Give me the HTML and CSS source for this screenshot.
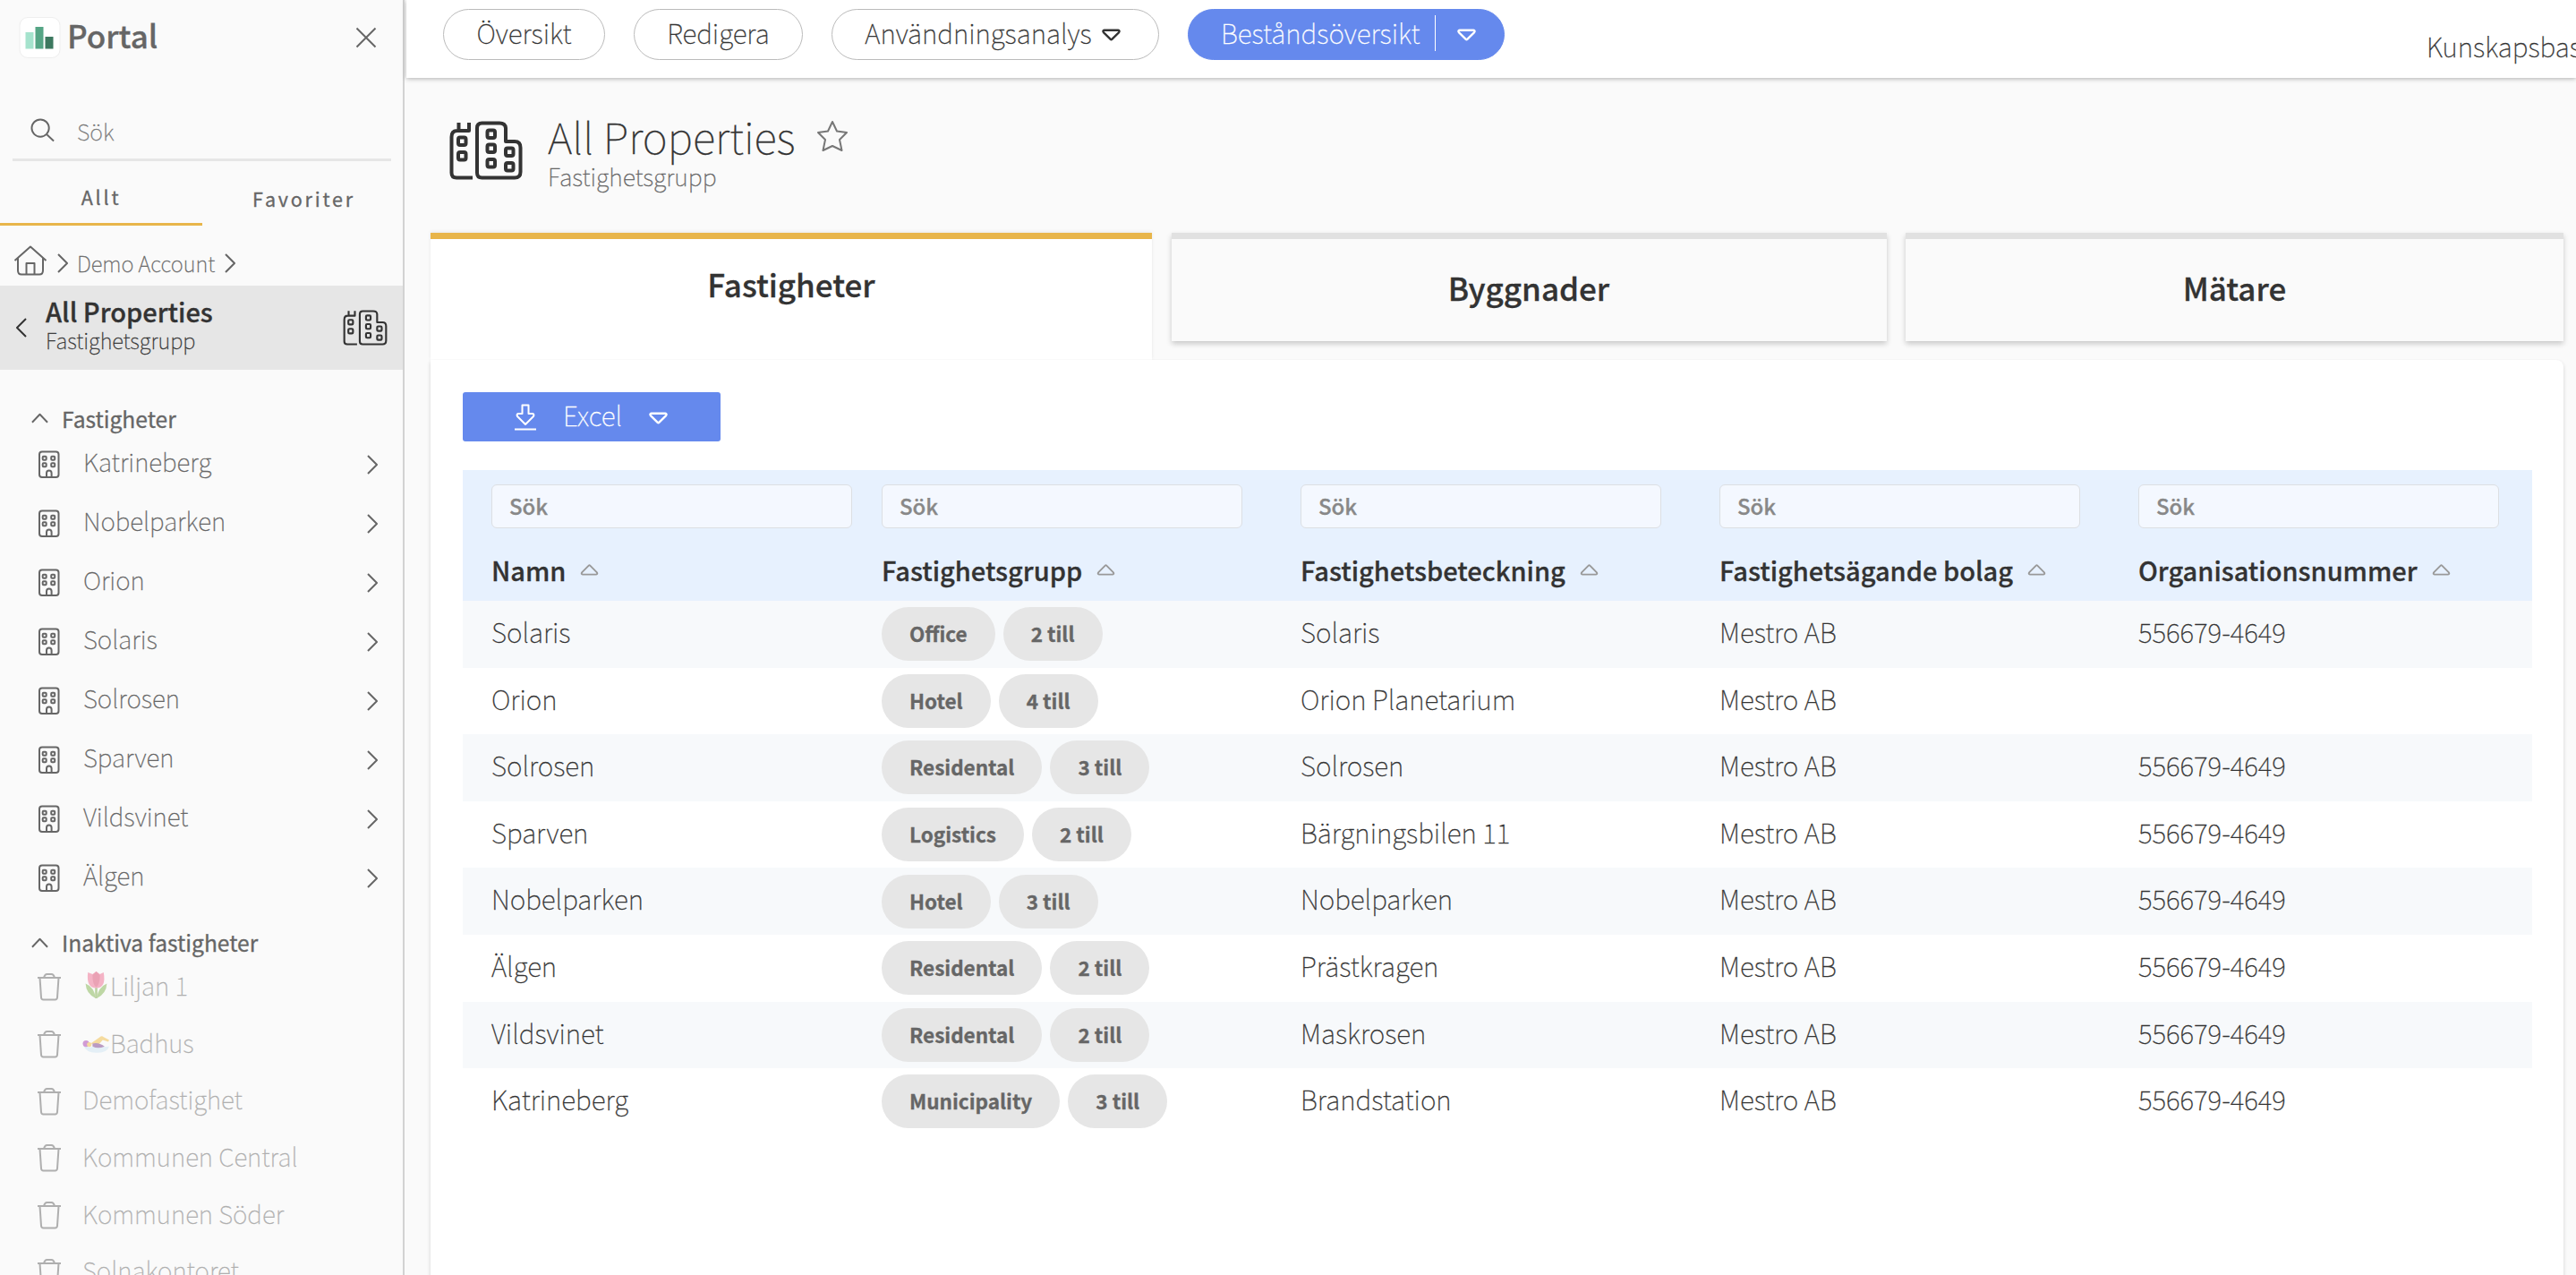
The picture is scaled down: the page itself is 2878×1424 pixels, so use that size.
FILE: index.html
```html
<!DOCTYPE html>
<html lang="sv">
<head>
    <meta charset="UTF-8">
    <meta name="viewport" content="width=device-width, initial-scale=1.0">
    <title>Portal - All Properties</title>
    <link rel="stylesheet" href="styles.css">
</head>
<body>
    <!-- Shared icons -->
    <svg class="sprite" width="0" height="0">
        <symbol id="chevron" viewBox="0 0 12 22"><path d="M1 1 L11 11 L1 21"/></symbol>
        <symbol id="up" viewBox="0 0 20 12"><path d="M1 11 L10 1.5 L19 11"/></symbol>
        <symbol id="triangle" viewBox="0 0 22 14"><path d="M3 1.5 H19 Q21.5 2 19.8 4.2 L11.8 12.2 Q11 13 10.2 12.2 L2.2 4.2 Q0.5 2 3 1.5 Z"/></symbol>
        <symbol id="building" viewBox="0 0 24 32">
            <rect x="1" y="1.5" width="21.5" height="28.5" rx="3"/>
            <rect x="4.7" y="6.7" width="4" height="4" rx="1"/><rect x="14.2" y="6.7" width="4" height="4" rx="1"/>
            <rect x="4.7" y="14.2" width="4" height="4" rx="1"/><rect x="14.2" y="14.2" width="4" height="4" rx="1"/>
            <path d="M9 30 V25.5 Q9 22.5 11.8 22.5 Q14.6 22.5 14.6 25.5 V30"/>
        </symbol>
        <symbol id="trash" viewBox="0 0 28 32"><path d="M1 6 H27 M8 6 Q9 2 11.5 2 H16.5 Q19 2 20 6 M3.5 6 L5 28 Q5.2 30.5 7.5 30.5 H20.5 Q22.8 30.5 23 28 L24.5 6"/></symbol>
        <symbol id="group" viewBox="0 0 82 66">
            <path d="M26 63.5 H8 Q2.5 63.5 2.5 58 V18 Q2.5 11 9 11 H10.5 V2 M10.5 11 H22 V2"/>
            <path d="M31 8 Q31 2.5 36.5 2.5 H56 Q62.5 2.5 63 8 V23 H73 Q79.5 23 79.5 30 V57 Q79.5 63.5 73 63.5 H36.5 Q31 63.5 31 58 Z"/>
            <rect x="10" y="18.5" width="8.5" height="8.5" rx="2"/><rect x="10" y="35" width="8.5" height="8.5" rx="2"/>
            <rect x="42.5" y="10.5" width="8.5" height="8.5" rx="2"/><rect x="42.5" y="26.5" width="8.5" height="8.5" rx="2"/><rect x="42.5" y="43" width="8.5" height="8.5" rx="2"/>
            <rect x="63" y="30.5" width="8.5" height="8.5" rx="2"/><rect x="63" y="47" width="8.5" height="8.5" rx="2"/>
        </symbol>
    </svg>

    <div class="app">
        <aside class="sidebar">
            <div class="brand">
                <svg class="logo" viewBox="0 0 46 46">
                    <rect x="0.5" y="0.5" width="45" height="45" rx="9" fill="#fff" stroke="#eee"/>
                    <rect x="7" y="17" width="9" height="18.5" fill="#a5e3cd"/>
                    <rect x="18" y="11" width="9" height="24.5" fill="#55a585"/>
                    <rect x="29" y="22" width="9" height="13.5" fill="#3c785f"/>
                </svg>
                <span class="brand-name">Portal</span>
                <svg class="icon close" viewBox="0 0 24 24"><path d="M1.5 1.5 L22.5 22.5 M22.5 1.5 L1.5 22.5"/></svg>
            </div>

            <div class="search">
                <svg class="icon search-icon" viewBox="0 0 28 28"><circle cx="11.5" cy="11.5" r="10"/><path d="M19 19 L27 26.5"/></svg>
                <span>Sök</span>
            </div>

            <div class="side-tabs">
                <div class="side-tab active">Allt</div>
                <div class="side-tab">Favoriter</div>
            </div>

            <div class="breadcrumb">
                <svg class="icon home" viewBox="0 0 38 34"><path d="M1.5 17 L19 1.5 L36.5 17 M5 14 V28 Q5 32.5 9 32.5 H29 Q33 32.5 33 28 V14 M14.5 32 V20 H23.5 V32"/></svg>
                <svg class="icon chevron"><use href="#chevron"/></svg>
                <span>Demo Account</span>
                <svg class="icon chevron"><use href="#chevron"/></svg>
            </div>

            <div class="current">
                <svg class="icon chevron back"><use href="#chevron"/></svg>
                <div class="current-text">
                    <div class="current-title">All Properties</div>
                    <div class="current-sub">Fastighetsgrupp</div>
                </div>
                <svg class="icon group-small"><use href="#group"/></svg>
            </div>

            <div class="section-title"><svg class="icon up"><use href="#up"/></svg>Fastigheter</div>
            <ul class="nav-list">
                <li><svg class="icon building"><use href="#building"/></svg><span>Katrineberg</span><svg class="icon chevron"><use href="#chevron"/></svg></li>
                <li><svg class="icon building"><use href="#building"/></svg><span>Nobelparken</span><svg class="icon chevron"><use href="#chevron"/></svg></li>
                <li><svg class="icon building"><use href="#building"/></svg><span>Orion</span><svg class="icon chevron"><use href="#chevron"/></svg></li>
                <li><svg class="icon building"><use href="#building"/></svg><span>Solaris</span><svg class="icon chevron"><use href="#chevron"/></svg></li>
                <li><svg class="icon building"><use href="#building"/></svg><span>Solrosen</span><svg class="icon chevron"><use href="#chevron"/></svg></li>
                <li><svg class="icon building"><use href="#building"/></svg><span>Sparven</span><svg class="icon chevron"><use href="#chevron"/></svg></li>
                <li><svg class="icon building"><use href="#building"/></svg><span>Vildsvinet</span><svg class="icon chevron"><use href="#chevron"/></svg></li>
                <li><svg class="icon building"><use href="#building"/></svg><span>Älgen</span><svg class="icon chevron"><use href="#chevron"/></svg></li>
            </ul>

            <div class="section-title inactive-title"><svg class="icon up"><use href="#up"/></svg>Inaktiva fastigheter</div>
            <ul class="nav-list inactive">
                <li>
                    <svg class="icon trash"><use href="#trash"/></svg>
                    <svg class="emoji" viewBox="0 0 30 30">
                        <path d="M15 16 V29" stroke="#7fae4d" stroke-width="2.5"/>
                        <path d="M14.5 29 Q13 17 3.5 13 Q4 24 14.5 29 M15.5 29 Q17 17 26.5 13 Q26 24 15.5 29" fill="#83b553"/>
                        <path d="M6 1 L11 3 L15 0 L19 3 L23 1 Q26 18 15 18 Q4 18 6 1" fill="#ef6f92"/>
                        <path d="M15 0 L19 4 Q19 14 15 17 Q11 14 11 4 Z" fill="#dc4c72"/>
                    </svg>
                    <span>Liljan 1</span>
                </li>
                <li>
                    <svg class="icon trash"><use href="#trash"/></svg>
                    <svg class="emoji" viewBox="0 0 30 30">
                        <path d="M1 18 Q8 22 15 18 Q23 20 29 19 Q27 26 15 26 Q4 26 1 18" fill="#cfe6f4"/>
                        <path d="M9 16 L19 9 Q21 7 23 9 L29 12 L28 14 L22 12 L17 18 Z" fill="#f2bd45"/>
                        <path d="M11 16 Q17 14 24 19 Q17 22 11 19 Z" fill="#7b3f8d"/>
                        <circle cx="4" cy="16" r="3.5" fill="#a93fb2"/><circle cx="7.5" cy="17" r="2.5" fill="#f2bd45"/>
                    </svg>
                    <span>Badhus</span>
                </li>
                <li><svg class="icon trash"><use href="#trash"/></svg><span>Demofastighet</span></li>
                <li><svg class="icon trash"><use href="#trash"/></svg><span>Kommunen Central</span></li>
                <li><svg class="icon trash"><use href="#trash"/></svg><span>Kommunen Söder</span></li>
                <li><svg class="icon trash"><use href="#trash"/></svg><span>Solnakontoret</span></li>
            </ul>
        </aside>

        <main class="main">
            <header class="topbar">
                <div class="pill pill-overview">Översikt</div>
                <div class="pill pill-edit">Redigera</div>
                <div class="pill pill-usage">Användningsanalys<svg class="icon triangle"><use href="#triangle"/></svg></div>
                <div class="pill primary"><span class="primary-label">Beståndsöversikt</span><svg class="icon triangle"><use href="#triangle"/></svg></div>
                <div class="help">Kunskapsbas</div>
            </header>

            <div class="page-head">
                <svg class="icon group-large"><use href="#group"/></svg>
                <div class="page-text">
                    <div class="page-title">
                        <h1>All Properties</h1>
                        <svg class="icon star" viewBox="0 0 36 36"><path d="M18 2 L23 12.5 L34 14 L26 22 L28.5 34 L18 29 L7.5 34 L10 22 L2 14 L13 12.5 Z"/></svg>
                    </div>
                    <div class="page-sub">Fastighetsgrupp</div>
                </div>
            </div>

            <div class="tabs">
                <div class="tab active">Fastigheter</div>
                <div class="tab">Byggnader</div>
                <div class="tab">Mätare</div>
            </div>

            <section class="panel">
                <div class="excel">
                    <svg class="icon download" viewBox="0 0 24 30"><path d="M8.5 1.5 H15.5 V11 H20.5 Q22 12 21 14 L12 23 L3 14 Q2 12 3.5 11 H8.5 Z M0 28.5 H24"/></svg>
                    <span>Excel</span>
                    <svg class="icon triangle"><use href="#triangle"/></svg>
                </div>

                <div class="table">
                    <div class="table-head">
                        <div class="col"><div class="filter">Sök</div><div class="label">Namn<svg class="icon sort"><use href="#triangle"/></svg></div></div>
                        <div class="col"><div class="filter">Sök</div><div class="label">Fastighetsgrupp<svg class="icon sort"><use href="#triangle"/></svg></div></div>
                        <div class="col"><div class="filter">Sök</div><div class="label">Fastighetsbeteckning<svg class="icon sort"><use href="#triangle"/></svg></div></div>
                        <div class="col"><div class="filter">Sök</div><div class="label">Fastighetsägande bolag<svg class="icon sort"><use href="#triangle"/></svg></div></div>
                        <div class="col"><div class="filter">Sök</div><div class="label">Organisationsnummer<svg class="icon sort"><use href="#triangle"/></svg></div></div>
                    </div>
                    <div class="row"><div>Solaris</div><div><span class="chip">Office</span><span class="chip">2 till</span></div><div>Solaris</div><div>Mestro AB</div><div>556679-4649</div></div>
                    <div class="row"><div>Orion</div><div><span class="chip">Hotel</span><span class="chip">4 till</span></div><div>Orion Planetarium</div><div>Mestro AB</div><div></div></div>
                    <div class="row"><div>Solrosen</div><div><span class="chip">Residental</span><span class="chip">3 till</span></div><div>Solrosen</div><div>Mestro AB</div><div>556679-4649</div></div>
                    <div class="row"><div>Sparven</div><div><span class="chip">Logistics</span><span class="chip">2 till</span></div><div>Bärgningsbilen 11</div><div>Mestro AB</div><div>556679-4649</div></div>
                    <div class="row"><div>Nobelparken</div><div><span class="chip">Hotel</span><span class="chip">3 till</span></div><div>Nobelparken</div><div>Mestro AB</div><div>556679-4649</div></div>
                    <div class="row"><div>Älgen</div><div><span class="chip">Residental</span><span class="chip">2 till</span></div><div>Prästkragen</div><div>Mestro AB</div><div>556679-4649</div></div>
                    <div class="row"><div>Vildsvinet</div><div><span class="chip">Residental</span><span class="chip">2 till</span></div><div>Maskrosen</div><div>Mestro AB</div><div>556679-4649</div></div>
                    <div class="row"><div>Katrineberg</div><div><span class="chip">Municipality</span><span class="chip">3 till</span></div><div>Brandstation</div><div>Mestro AB</div><div>556679-4649</div></div>
                </div>
            </section>
        </main>
    </div>
</body>
</html>
```
FILE: styles.css
```css
* {
    box-sizing: border-box;
}

body {
    margin: 0;
    font-family: "Noto Sans CJK SC", "Open Sans", sans-serif;
    font-weight: 100;
    font-size: 29.8px;
    line-height: 1;
    color: #333;
    background-color: #fafafa;
    overflow: hidden;
    white-space: nowrap;
    -webkit-text-stroke: 0.3px; /* thin weight is too faint on its own */
}

.sprite {
    display: block;
}

.icon {
    fill: none;
    stroke: currentColor;
    stroke-width: 2;
    stroke-linejoin: round;
    flex: none;
}

.app {
    display: flex;
    height: 1424px;
    overflow: hidden;
}

/* Sidebar */
.sidebar {
    width: 452px;
    flex: none;
    border-right: 2px solid #d2d2d2;
    color: #666;
    overflow: hidden;
}

.brand {
    display: flex;
    align-items: center;
    height: 84px;
    padding: 0 29px 0 21px;
}

.logo {
    width: 47px;
    height: 46px;
}

.brand-name {
    margin-left: 7px;
    padding-bottom: 7px;
    font-size: 35px;
    font-weight: 500;
}

.close {
    width: 24px;
    height: 24px;
    margin-left: auto;
}

.search {
    display: flex;
    align-items: center;
    gap: 25px;
    height: 66px;
    margin: 30px 13px 0 14px;
    padding-left: 20px;
    border-bottom: 3px solid #e6e6e6;
    font-size: 25px;
    color: #777;
}

.search span {
    padding-top: 1px;
}

.search-icon {
    width: 27px;
    height: 27px;
    color: #666;
}

.side-tabs {
    display: flex;
    height: 72px;
    font-size: 21.5px;
    font-weight: 400;
    letter-spacing: 2.8px;
}

.side-tab {
    width: 224px;
    display: flex;
    align-items: center;
    justify-content: center;
    padding: 12px 0 0 3px;
}

.side-tab.active {
    width: 226px;
    padding: 11px 0 0;
    border-bottom: 3px solid #e8b54a;
}

.breadcrumb {
    display: flex;
    align-items: center;
    height: 67px;
    padding: 17px 0 0 15px;
    font-size: 24px;
    color: #666;
}

.home {
    width: 38px;
    height: 34px;
    margin: 0 11px 6px 0;
}

.chevron {
    width: 12px;
    height: 22px;
}

.breadcrumb span {
    margin: 0 11px 0 10px;
    font-size: 23.8px;
}

.current {
    display: flex;
    align-items: center;
    height: 94px;
    padding: 0 17px 0 18px;
    background-color: #e6e6e6;
    color: #333;
}

.back {
    transform: scaleX(-1);
}

.current-text {
    margin-left: 21px;
    padding-bottom: 7px;
}

.current-title {
    font-size: 29px;
    font-weight: 500;
    line-height: 34px;
}

.current-sub {
    font-size: 23.8px;
    line-height: 31px;
}

.group-small {
    width: 50px;
    height: 40px;
    margin-left: auto;
    stroke-width: 3.5;
}

.group-large {
    width: 82px;
    height: 66px;
    stroke-width: 4;
}

.section-title {
    display: flex;
    align-items: center;
    height: 32px;
    margin-top: 38px;
    padding-left: 35px;
    font-size: 24.6px;
    font-weight: 400;
}

.inactive-title {
    height: 33px;
    margin-top: 25px;
}

.up {
    width: 19px;
    height: 12px;
    margin-right: 15px;
}

.nav-list {
    margin: 0;
    padding: 0;
    list-style: none;
    font-size: 27.9px;
}

.nav-list li {
    display: flex;
    align-items: center;
    height: 66px;
    padding: 0 28px 0 43px;
}

.building {
    width: 24px;
    height: 32px;
    margin: 6px 26px 0 0;
}

.nav-list .chevron {
    margin: 5px 0 0 auto;
}

.inactive li {
    height: 63.7px;
    padding-left: 41px;
    opacity: 0.5;
}

.trash {
    width: 28px;
    height: 32px;
    margin: 3px 23px 0 0;
}

.emoji {
    width: 31px;
    height: 31px;
}

/* Top bar */
.main {
    flex: 1;
    min-width: 0;
    margin-left: 2px;
}

.topbar {
    display: flex;
    height: 87px;
    padding: 10px 0 0 41px;
    background-color: #fff;
    box-shadow: 0 1px 5px rgba(0, 0, 0, 0.3);
}

.pill {
    display: flex;
    align-items: center;
    justify-content: center;
    height: 57px;
    margin-right: 32px;
    padding-bottom: 3px;
    border: 1px solid #bbb;
    border-radius: 29px;
}

.pill-overview {
    width: 181px;
}

.pill-edit {
    width: 189px;
}

.pill-usage {
    width: 366px;
    padding-right: 6px;
}

.triangle {
    width: 21px;
    height: 14px;
    margin: 3px 0 0 11px;
    stroke-width: 2.5;
}

.primary {
    width: 354px;
    justify-content: flex-start;
    padding-left: 36px;
    border-color: #6589ed;
    background-color: #6589ed;
    color: #fff;
}

.primary-label {
    padding: 5px 17px 5px 0;
    border-right: 1.5px solid #fff;
}

.primary .triangle {
    margin-left: 24px;
}

.help {
    width: 167px;
    height: 60px;
    margin: 8px 0 0 auto;
    line-height: 66px;
}

/* Page heading */
.page-head {
    display: flex;
    height: 173px;
    padding: 48px 0 0 48px;
}

.page-text {
    margin: -14px 0 0 28px;
}

.page-title {
    display: flex;
    align-items: center;
}

.page-title h1 {
    margin: 0;
    font-size: 47.5px;
    font-weight: 100;
    line-height: 61px;
}

.star {
    width: 36px;
    height: 36px;
    margin: 1px 0 0 23px;
    color: #777;
}

.page-sub {
    font-size: 26.8px;
    line-height: 30px;
    color: #666;
}

/* Tabs */
.tabs {
    display: flex;
    gap: 21.5px;
    height: 142px;
    padding: 0 14px 0 27px;
}

.tab {
    width: 799px;
    height: 121px;
    border-top: 7px solid #e1e1e1;
    background-color: #fafafa;
    box-shadow: 0 3px 6px rgba(0, 0, 0, 0.2);
    font-size: 35px;
    font-weight: 500;
    line-height: 108px;
    text-align: center;
}

.tab.active {
    width: 806px;
    height: 142px;
    border-color: #e8b54a;
    background-color: #fff;
    box-shadow: 0 -1px 4px rgba(0, 0, 0, 0.08);
    line-height: 100px;
}

.tab:last-child {
    width: 735px;
}

.panel {
    height: 1030px;
    margin: 0 14px 0 27px;
    padding: 36px 35px 0 36px;
    border-radius: 0 8px 0 0;
    background-color: #fff;
    box-shadow: 0 2px 4px rgba(0, 0, 0, 0.16);
    clip-path: inset(-1px -6px 0 -6px);
}

.excel {
    display: flex;
    align-items: center;
    width: 288px;
    height: 55px;
    padding-left: 58px;
    border-radius: 3px;
    background-color: #6589ed;
    color: #fff;
}

.excel span {
    margin: 0 19px 0 30px;
    padding-bottom: 4px;
}

.download {
    width: 24px;
    height: 30px;
}

/* Table */
.table {
    margin-top: 32px;
}

.table-head,
.row {
    display: grid;
    grid-template-columns: 436px 468px 468px 468px 1fr;
}

.table-head {
    height: 146px;
    padding-top: 16px;
    background-color: #e7f1fe;
}

.col {
    padding-left: 32px;
}

.filter {
    width: 403px;
    height: 49px;
    padding-left: 19px;
    border: 1px solid #dcdfe3;
    border-radius: 6px;
    background-color: #f4f8ff;
    font-size: 24px;
    font-weight: 500;
    line-height: 45px;
    color: #888;
}

.label {
    display: flex;
    align-items: center;
    margin-top: 31px;
    font-size: 29px;
    font-weight: 500;
    line-height: 31px;
}

.sort {
    width: 21px;
    height: 13px;
    margin: 0 0 1px 16px;
    color: #999;
    transform: scaleY(-1);
}

.row {
    height: 74.6px;
    line-height: 69px;
}

.row:nth-child(even) {
    background-color: #f7f9fb;
}

.row > div {
    padding-left: 32px;
}

.row > div:nth-child(2) {
    display: flex;
    align-items: center;
    gap: 9px;
}

.chip {
    height: 60px;
    padding: 0 31px;
    border-radius: 30px;
    background-color: #e6e6e6;
    font-size: 22.5px;
    font-weight: 700;
    line-height: 58px;
    color: #666;
}
```
